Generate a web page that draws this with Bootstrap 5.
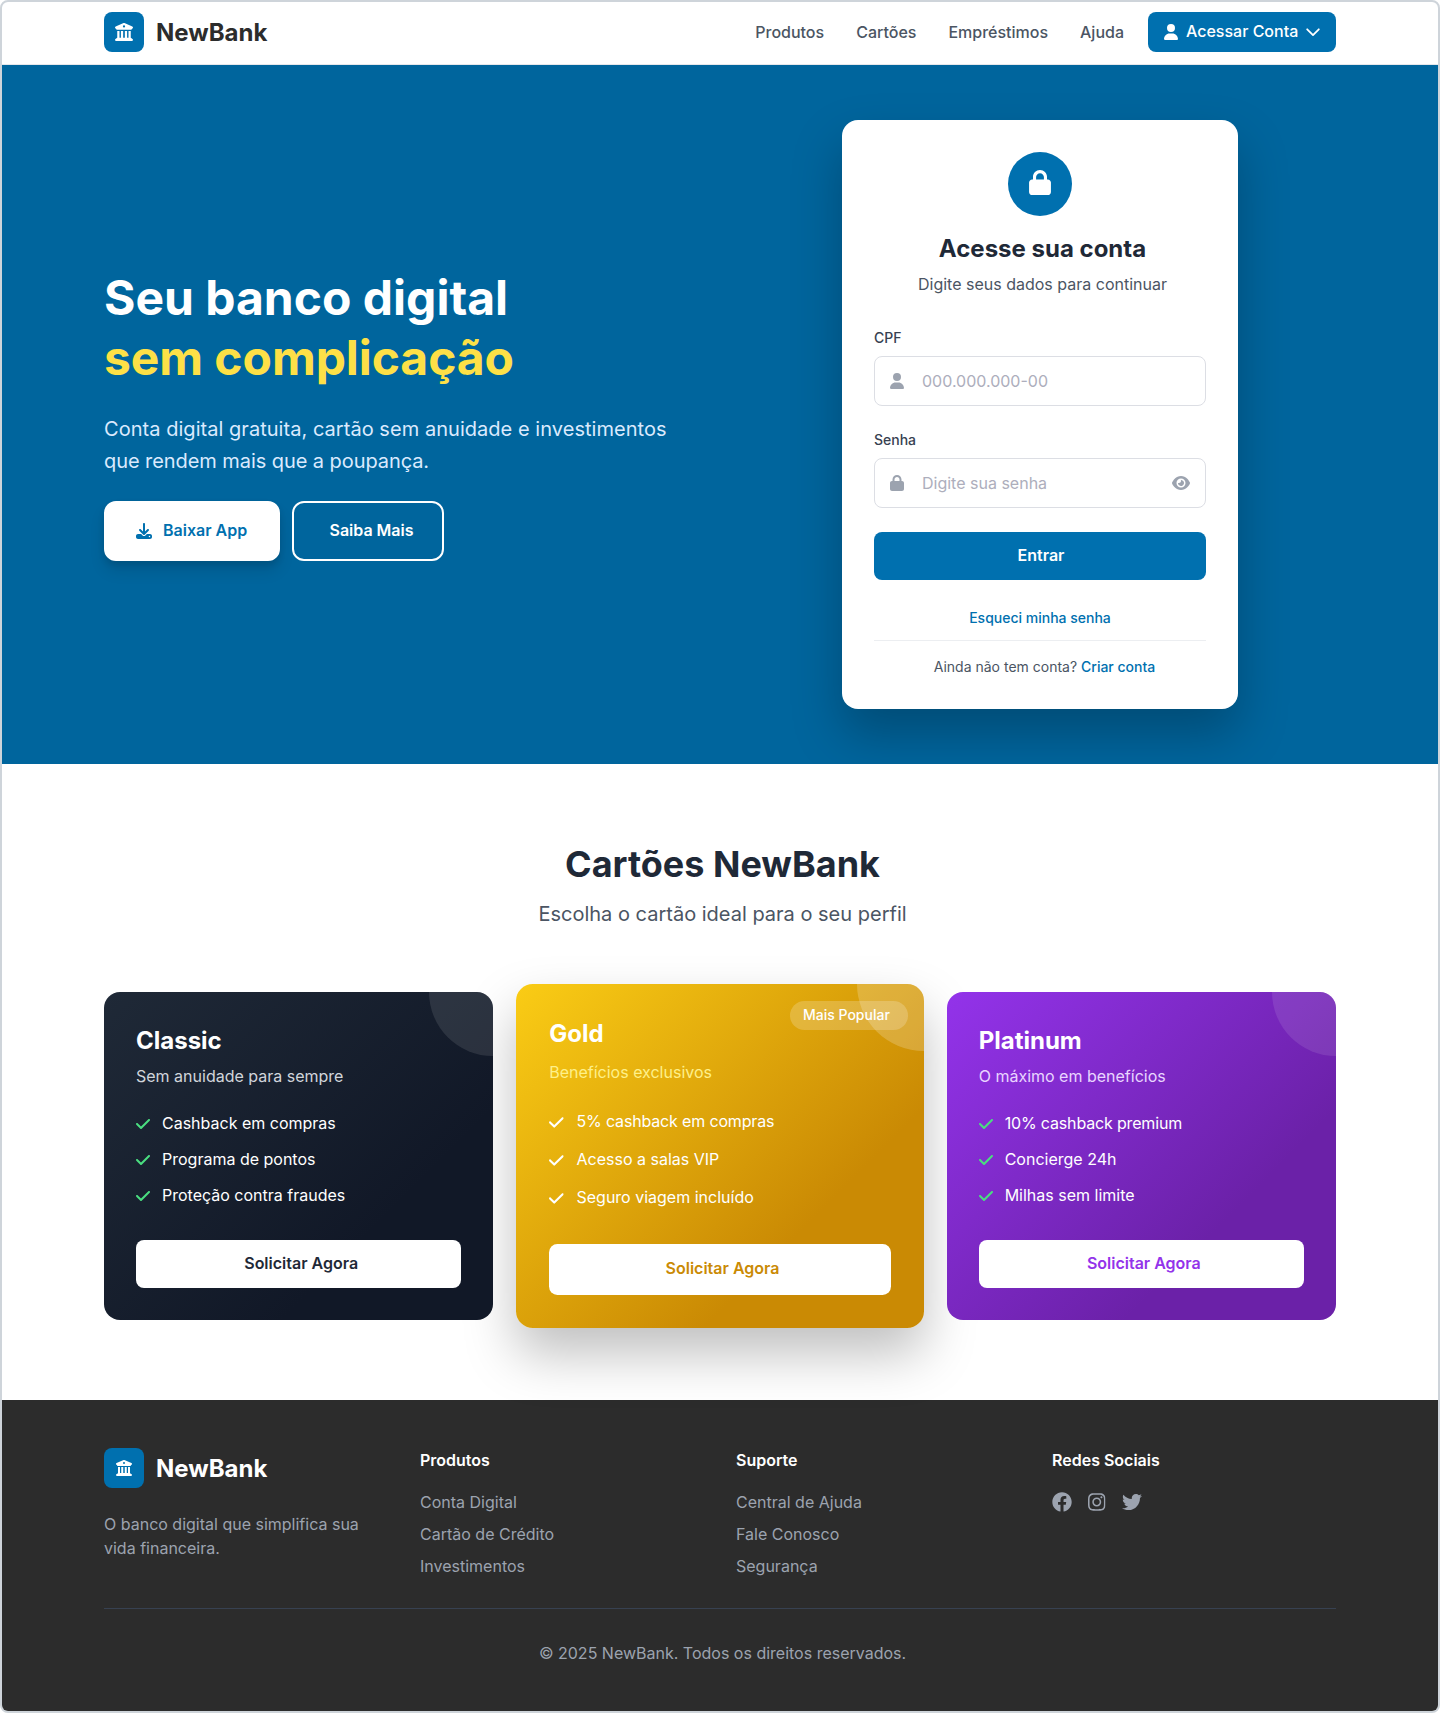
<!DOCTYPE html>
<html lang="pt-BR">
<head>
<meta charset="utf-8">
<meta name="viewport" content="width=device-width, initial-scale=1">
<title>NewBank</title>
<link href="https://cdn.jsdelivr.net/npm/bootstrap@5.3.0/dist/css/bootstrap.min.css" rel="stylesheet">
<style>
  :root { --nb-primary: #0070af; --nb-deep: #00659d; --nb-ink: #1f2937; --nb-body: #4b5563; --nb-muted: #9ca3af; }
  body { font-family: Inter, "Liberation Sans", sans-serif; font-size: 16px; line-height: 24px; color: var(--nb-body); background: #fff; }
  svg { display: block; fill: currentColor; flex: none; }
  .page-frame { border: 2px solid #ced4da; border-radius: 8px; overflow: hidden; height: 1713px; }
  .wrap { width: 1280px; margin: 0 auto; padding: 0 24px; }
  .topbar { height: 63px; padding: 10px 0 12px; border-bottom: 1px solid #e5e7eb; }
  .brand-tile { width: 40px; height: 40px; border-radius: 8px; background: var(--nb-primary); color: #fff; }
  .brand-name { font-size: 24px; font-weight: 700; line-height: 32px; color: #2c2c2c; padding-top: 2px; }
  .topbar .nav-link { padding: 0; font-weight: 500; color: var(--nb-body); }
  .main-nav { gap: 32px; margin-right: 24px; }
  .btn-account { width: 188px; height: 40px; padding: 0 0 0 16px; border: 0; border-radius: 8px; background: var(--nb-primary); color: #fff; font-weight: 500; }
  .btn-account span { padding-bottom: 2px; }
  .hero { height: 699px; padding-bottom: 1px; background: var(--nb-deep); overflow: hidden; }
  .hero-cols { display: grid; grid-template-columns: 592px 592px; gap: 48px; }
  .hero h1 { font-size: 48px; line-height: 60px; font-weight: 700; color: #fff; margin: 0 0 25px; }
  .hero h1 span { color: #fde047; letter-spacing: -.07px; }
  .hero-text { font-size: 20px; line-height: 32.5px; color: #dbeafe; margin: 0 0 23px; letter-spacing: .04px; }
  .hero-text span { letter-spacing: -.07px; }
  .btn-hero { height: 60px; border-radius: 12px; font-weight: 600; border: 2px solid #fff; }
  .btn-hero span { padding-bottom: 1px; }
  .btn-download { width: 176px; padding: 0 0 0 30px; gap: 11px; background: #fff; color: var(--nb-primary); box-shadow: 0 10px 15px rgba(0,0,0,.1), 0 4px 6px rgba(0,0,0,.1); }
  .btn-more { width: 152px; color: #fff; padding-left: 19px; }
  .login-box { width: 396px; height: 589px; padding: 32px; border-radius: 16px; background: #fff; box-shadow: 0 25px 50px rgba(0,0,0,.25); }
  .lock-disc { width: 64px; height: 64px; padding-bottom: 2px; border-radius: 50%; background: var(--nb-primary); color: #fff; margin-bottom: 17px; }
  .login-box h2 { font-size: 24px; line-height: 32px; font-weight: 700; color: var(--nb-ink); margin: 0 0 7px; }
  .form-label { font-size: 14px; line-height: 20px; font-weight: 500; color: #374151; margin: 0 0 8px; display: block; }
  .field { height: 50px; border: 1px solid #dcdee4; border-radius: 8px; padding: 0 15px; color: var(--nb-muted); margin-bottom: 24px; }
  .field input { border: 0; outline: 0; background: none; flex: 1; min-width: 0; margin-left: 18px; padding: 0; color: var(--nb-ink); }
  .field input::placeholder { color: #adaebc; opacity: 1; }
  .btn-enter { height: 48px; padding: 0 0 2px 2px; border: 0; border-radius: 8px; background: var(--nb-primary); color: #fff; font-weight: 600; margin-bottom: 28px; }
  .small-line { font-size: 14px; line-height: 20px; }
  .small-line a, a.small-line { color: var(--nb-primary); font-weight: 500; text-decoration: none; }
  .login-foot { margin-top: 12px; border-top: 1px solid #eceef1; padding: 16px 0 0 9px; }
  .cards-zone { height: 636px; padding-top: 80px; }
  .cards-zone h2 { font-size: 36px; line-height: 40px; font-weight: 700; color: var(--nb-ink); margin: 0 0 16px; }
  .cards-sub { font-size: 20px; line-height: 28px; margin: 0 0 64px; }
  .offer-row { --bs-gutter-x: 32px; }
  .offer { --u: 1px; --glow: .1; position: relative; overflow: hidden; height: calc(328 * var(--u)); padding: calc(32 * var(--u)); border-radius: calc(16 * var(--u)); color: #fff; }
  .offer::after { content: ""; position: absolute; width: calc(128 * var(--u)); height: calc(128 * var(--u)); top: calc(-64 * var(--u)); right: calc(-64 * var(--u)); border-radius: 50%; background: rgba(255,255,255,var(--glow)); }
  .offer h3 { font-size: 24px; line-height: 32px; font-weight: 700; height: calc(32 * var(--u)); margin: 0 0 calc(8 * var(--u)); padding-top: 1px; }
  .offer-sub { height: calc(24 * var(--u)); margin: 0 0 calc(24 * var(--u)); }
  .offer ul { margin: 0 0 calc(32 * var(--u)); padding: 0; list-style: none; display: grid; gap: calc(12 * var(--u)); }
  .offer li { display: flex; align-items: center; gap: calc(12 * var(--u)); height: calc(24 * var(--u)); }
  .offer li span { padding-bottom: 2px; }
  .offer li .pct { letter-spacing: -.16px; }
  .offer li svg { width: calc(14 * var(--u)); height: calc(16 * var(--u)); color: #4ade80; }
  .offer .btn { height: calc(48 * var(--u)); padding: 0 0 2px 5px; border: 0; border-radius: calc(8 * var(--u)); background: #fff; font-weight: 600; }
  .offer-classic { background: linear-gradient(135deg, #1f2937 0%, #111827 70.7%); }
  .offer-classic .offer-sub { color: #d1d5db; }
  .offer-classic .btn { color: #1f2937; }
  .gold-shadow { border-radius: 16.8px; box-shadow: 0 26px 52px rgba(0,0,0,.25); margin: -8.2px -9.73px; }
  .offer-gold { --u: 1.05px; --glow: .2; background: linear-gradient(135deg, #facc15 0%, #ca8a04 70.7%); }
  .offer-gold .offer-sub { color: #fef08a; padding-top: .6px; }
  .offer-gold li svg { color: #fff; }
  .offer-gold .btn { color: #ca8a04; }
  .offer-platinum { background: linear-gradient(135deg, #9333ea 0%, #6b21a8 70.7%); }
  .offer-platinum .offer-sub { color: #e9d5ff; }
  .offer-platinum .btn { color: #9333ea; }
  .popular-pill { position: absolute; top: 16.8px; right: 16.8px; width: 118px; height: 29.4px; padding: 4px 0 0 13.4px; border-radius: 15px; background: rgba(255,255,255,.2); font-size: 14px; line-height: 20px; font-weight: 500; }
  .site-footer { height: 311px; background: #2c2c2c; color: var(--nb-muted); padding-top: 48px; }
  .foot-cols { --bs-gutter-x: 32px; height: 160px; }
  .site-footer .brand-name { color: #fff; }
  .site-footer h4 { font-size: 16px; line-height: 24px; font-weight: 600; color: #fff; margin: 0; }
  .foot-links { margin: 18px 0 0; padding: 0; list-style: none; display: grid; gap: 8px; }
  .foot-links a, .socials a { color: inherit; text-decoration: none; }
  .socials { margin-top: 19.5px; gap: 16px; }
  .foot-base { border-top: 1px solid #374151; padding: 32px 0 0 5px; }
  .nudge { padding-left: 5px; }
</style>
</head>
<body>
<svg width="0" height="0" class="position-absolute" aria-hidden="true">
  <symbol id="i-bank" viewBox="0 0 512 512"><path d="M243.4 2.6l-224 96c-14 6-21.8 21-18.7 35.8S16.8 160 32 160v8c0 13.3 10.7 24 24 24H456c13.3 0 24-10.7 24-24v-8c15.2 0 28.3-10.7 31.3-25.6s-4.8-29.9-18.7-35.8l-224-96c-8-3.4-17.2-3.4-25.2 0zM128 224H64V420.3c-.6 .3-1.2 .7-1.8 1.1l-48 32c-11.7 7.8-17 22.4-12.9 35.9S17.9 512 32 512H480c14.1 0 26.5-9.2 30.6-22.7s-1.1-28.1-12.9-35.9l-48-32c-.6-.4-1.2-.7-1.8-1.1V224H384V416H344V224H280V416H232V224H168V416H128V224zM256 64a32 32 0 1 1 0 64 32 32 0 1 1 0-64z"/></symbol>
  <symbol id="i-user" viewBox="0 0 448 512"><path d="M224 256A128 128 0 1 0 224 0a128 128 0 1 0 0 256zm-45.7 48C79.8 304 0 383.8 0 482.3C0 498.7 13.3 512 29.7 512H418.3c16.4 0 29.7-13.3 29.7-29.7C448 383.8 368.2 304 269.7 304H178.3z"/></symbol>
  <symbol id="i-lock" viewBox="0 0 448 512"><path d="M144 144v48H304V144c0-44.2-35.8-80-80-80s-80 35.8-80 80zM80 192V144C80 64.5 144.5 0 224 0s144 64.5 144 144v48h16c35.3 0 64 28.7 64 64V448c0 35.3-28.7 64-64 64H64c-35.3 0-64-28.7-64-64V256c0-35.3 28.7-64 64-64H80z"/></symbol>
  <symbol id="i-eye" viewBox="0 0 576 512"><path d="M288 32c-80.8 0-145.5 36.8-192.6 80.6C48.6 156 17.3 208 2.5 243.7c-3.3 7.9-3.3 16.7 0 24.6C17.3 304 48.6 356 95.4 399.4C142.5 443.2 207.2 480 288 480s145.5-36.8 192.6-80.6c46.8-43.5 78.1-95.4 93-131.1c3.3-7.9 3.3-16.7 0-24.6c-14.9-35.7-46.2-87.7-93-131.1C433.5 68.8 368.8 32 288 32zM144 256a144 144 0 1 1 288 0 144 144 0 1 1 -288 0zm144-64c0 35.3-28.7 64-64 64c-7.1 0-13.9-1.2-20.3-3.3c-5.5-1.8-11.9 1.6-11.7 7.4c.3 6.9 1.3 13.8 3.2 20.7c13.7 51.2 66.4 81.6 117.6 67.9s81.6-66.4 67.9-117.6c-11.1-41.5-47.8-69.4-88.6-71.1c-5.8-.2-9.2 6.1-7.4 11.7c2.1 6.4 3.3 13.2 3.3 20.3z"/></symbol>
  <symbol id="i-check" viewBox="0 0 448 512"><path d="M438.6 105.4c12.5 12.5 12.5 32.8 0 45.3l-256 256c-12.5 12.5-32.8 12.5-45.3 0l-128-128c-12.5-12.5-12.5-32.8 0-45.3s32.8-12.5 45.3 0L160 338.7 393.4 105.4c12.5-12.5 32.8-12.5 45.3 0z"/></symbol>
  <symbol id="i-download" viewBox="0 0 512 512"><path d="M288 32c0-17.7-14.3-32-32-32s-32 14.3-32 32V274.7l-73.4-73.4c-12.5-12.5-32.8-12.5-45.3 0s-12.5 32.8 0 45.3l128 128c12.5 12.5 32.8 12.5 45.3 0l128-128c12.5-12.5 12.5-32.8 0-45.3s-32.8-12.5-45.3 0L288 274.7V32zM64 352c-35.3 0-64 28.7-64 64v32c0 35.3 28.7 64 64 64H448c35.3 0 64-28.7 64-64V416c0-35.3-28.7-64-64-64H346.5l-45.3 45.3c-25 25-65.5 25-90.5 0L165.5 352H64zm368 56a24 24 0 1 1 0 48 24 24 0 1 1 0-48z"/></symbol>
  <symbol id="i-facebook" viewBox="0 0 512 512"><path d="M504 256C504 119 393 8 256 8S8 119 8 256c0 123.78 90.69 226.38 209.25 245V327.69h-63V256h63v-54.64c0-62.15 37-96.48 93.67-96.48 27.14 0 55.52 4.84 55.52 4.84v61h-31.28c-30.8 0-40.41 19.12-40.41 38.73V256h68.78l-11 71.69h-57.78V501C413.31 482.38 504 379.78 504 256z"/></symbol>
  <symbol id="i-instagram" viewBox="0 0 448 512"><path d="M224.1 141c-63.6 0-114.9 51.3-114.9 114.9s51.3 114.9 114.9 114.9S339 319.5 339 255.9 287.7 141 224.1 141zm0 189.6c-41.1 0-74.7-33.5-74.7-74.7s33.5-74.7 74.7-74.7 74.7 33.5 74.7 74.7-33.6 74.7-74.7 74.7zm146.4-194.3c0 14.9-12 26.8-26.8 26.8-14.9 0-26.8-12-26.8-26.8s12-26.8 26.8-26.8 26.8 12 26.8 26.8zm76.1 27.2c-1.7-35.9-9.9-67.7-36.2-93.9-26.2-26.2-58-34.4-93.9-36.2-37-2.1-147.9-2.1-184.9 0-35.8 1.7-67.6 9.9-93.9 36.1s-34.4 58-36.2 93.9c-2.1 37-2.1 147.9 0 184.9 1.7 35.9 9.9 67.7 36.2 93.9s58 34.4 93.9 36.2c37 2.1 147.9 2.1 184.9 0 35.9-1.7 67.7-9.9 93.9-36.2 26.2-26.2 34.4-58 36.2-93.9 2.1-37 2.1-147.8 0-184.8zM398.8 388c-7.8 19.6-22.9 34.7-42.6 42.6-29.5 11.7-99.5 9-132.1 9s-102.7 2.6-132.1-9c-19.6-7.8-34.7-22.9-42.6-42.6-11.7-29.5-9-99.5-9-132.1s-2.6-102.7 9-132.1c7.8-19.6 22.9-34.7 42.6-42.6 29.5-11.7 99.5-9 132.1-9s102.7-2.6 132.1 9c19.6 7.8 34.7 22.9 42.6 42.6 11.7 29.5 9 99.5 9 132.1s2.7 102.7-9 132.1z"/></symbol>
  <symbol id="i-twitter" viewBox="0 0 512 512"><path d="M459.37 151.716c.325 4.548.325 9.097.325 13.645 0 138.72-105.583 298.558-298.558 298.558-59.452 0-114.68-17.219-161.137-47.106 8.447.974 16.568 1.299 25.34 1.299 49.055 0 94.213-16.568 130.274-44.832-46.132-.975-84.792-31.188-98.112-72.772 6.498.974 12.995 1.624 19.818 1.624 9.421 0 18.843-1.3 27.614-3.573-48.081-9.747-84.143-51.98-84.143-102.985v-1.299c13.969 7.797 30.214 12.67 47.431 13.319-28.264-18.843-46.781-51.005-46.781-87.391 0-19.492 5.197-37.36 14.294-52.954 51.655 63.675 129.3 105.258 216.365 109.807-1.624-7.797-2.599-15.918-2.599-24.04 0-57.828 46.782-104.934 104.934-104.934 30.213 0 57.502 12.67 76.67 33.137 23.715-4.548 46.456-13.32 66.599-25.34-7.798 24.366-24.366 44.833-46.132 57.827 21.117-2.273 41.584-8.122 60.426-16.243-14.292 20.791-32.161 39.308-52.628 54.253z"/></symbol>
</svg>
<div class="page-frame">
  <header class="topbar">
    <div class="wrap d-flex align-items-center justify-content-between">
      <div class="d-flex align-items-center">
        <div class="brand-tile d-flex align-items-center justify-content-center me-2"><svg width="18" height="18"><use href="#i-bank"/></svg></div>
        <span class="brand-name ms-1">NewBank</span>
      </div>
      <div class="d-flex align-items-center">
        <nav class="nav main-nav">
          <a class="nav-link" href="#">Produtos</a>
          <a class="nav-link" href="#">Cartões</a>
          <a class="nav-link" href="#">Empréstimos</a>
          <a class="nav-link" href="#">Ajuda</a>
        </nav>
        <button class="btn btn-account d-flex align-items-center gap-2" type="button">
          <svg width="14" height="16"><use href="#i-user"/></svg>
          <span>Acessar Conta</span>
          <svg width="14" height="16" viewBox="0 0 14 16"><path d="M1.2 5.3 7 11.1l5.8-5.8" fill="none" stroke="currentColor" stroke-width="1.8" stroke-linecap="round" stroke-linejoin="round"/></svg>
        </button>
      </div>
    </div>
  </header>

  <section class="hero d-flex align-items-center">
    <div class="wrap hero-cols align-items-center">
      <div>
        <h1>Seu banco digital<br><span>sem complicação</span></h1>
        <p class="hero-text">Conta digital gratuita, cartão sem anuidade e investimentos<br><span>que rendem mais que a poupança.</span></p>
        <div class="d-flex">
          <a class="btn btn-hero btn-download d-flex align-items-center me-2" href="#"><svg width="16" height="16"><use href="#i-download"/></svg><span>Baixar App</span></a>
          <a class="btn btn-hero btn-more d-flex align-items-center justify-content-center ms-1" href="#"><span>Saiba Mais</span></a>
        </div>
      </div>
      <form class="login-box mx-auto">
        <div class="lock-disc d-flex align-items-center justify-content-center mx-auto"><svg width="22" height="25"><use href="#i-lock"/></svg></div>
        <h2 class="text-center nudge">Acesse sua conta</h2>
        <p class="text-center nudge mb-0 pb-2">Digite seus dados para continuar</p>
        <label class="form-label pt-4" for="cpf">CPF</label>
        <div class="field d-flex align-items-center"><svg width="14" height="16"><use href="#i-user"/></svg><input id="cpf" type="text" placeholder="000.000.000-00"></div>
        <label class="form-label" for="senha">Senha</label>
        <div class="field d-flex align-items-center"><svg width="14" height="16"><use href="#i-lock"/></svg><input id="senha" type="password" placeholder="Digite sua senha"><svg width="18" height="16"><use href="#i-eye"/></svg></div>
        <button class="btn btn-enter w-100" type="button">Entrar</button>
        <a class="small-line d-block text-center" href="#">Esqueci minha senha</a>
        <div class="login-foot small-line text-center">Ainda não tem conta? <a href="#">Criar conta</a></div>
      </form>
    </div>
  </section>

  <section class="cards-zone">
    <div class="wrap">
      <h2 class="text-center nudge">Cartões NewBank</h2>
      <p class="cards-sub text-center nudge">Escolha o cartão ideal para o seu perfil</p>
      <div class="row offer-row">
        <div class="col-4">
          <div class="offer offer-classic">
            <h3>Classic</h3>
            <p class="offer-sub">Sem anuidade para sempre</p>
            <ul>
              <li><svg><use href="#i-check"/></svg><span>Cashback em compras</span></li>
              <li><svg><use href="#i-check"/></svg><span>Programa de pontos</span></li>
              <li><svg><use href="#i-check"/></svg><span>Proteção contra fraudes</span></li>
            </ul>
            <button class="btn w-100" type="button">Solicitar Agora</button>
          </div>
        </div>
        <div class="col-4">
          <div class="gold-shadow">
            <div class="offer offer-gold">
              <span class="popular-pill">Mais Popular</span>
              <h3>Gold</h3>
              <p class="offer-sub">Benefícios exclusivos</p>
              <ul>
                <li><svg><use href="#i-check"/></svg><span class="pct">5% cashback em compras</span></li>
                <li><svg><use href="#i-check"/></svg><span>Acesso a salas VIP</span></li>
                <li><svg><use href="#i-check"/></svg><span>Seguro viagem incluído</span></li>
              </ul>
              <button class="btn w-100" type="button">Solicitar Agora</button>
            </div>
          </div>
        </div>
        <div class="col-4">
          <div class="offer offer-platinum">
            <h3>Platinum</h3>
            <p class="offer-sub">O máximo em benefícios</p>
            <ul>
              <li><svg><use href="#i-check"/></svg><span class="pct">10% cashback premium</span></li>
              <li><svg><use href="#i-check"/></svg><span>Concierge 24h</span></li>
              <li><svg><use href="#i-check"/></svg><span>Milhas sem limite</span></li>
            </ul>
            <button class="btn w-100" type="button">Solicitar Agora</button>
          </div>
        </div>
      </div>
    </div>
  </section>

  <footer class="site-footer">
    <div class="wrap">
      <div class="row foot-cols">
        <div class="col-3">
          <div class="d-flex align-items-center mb-4">
            <div class="brand-tile d-flex align-items-center justify-content-center me-2"><svg width="16" height="16"><use href="#i-bank"/></svg></div>
            <span class="brand-name ms-1">NewBank</span>
          </div>
          <p class="mb-0">O banco digital que simplifica sua<br>vida financeira.</p>
        </div>
        <div class="col-3">
          <h4>Produtos</h4>
          <ul class="foot-links"><li><a href="#">Conta Digital</a></li><li><a href="#">Cartão de Crédito</a></li><li><a href="#">Investimentos</a></li></ul>
        </div>
        <div class="col-3">
          <h4>Suporte</h4>
          <ul class="foot-links"><li><a href="#">Central de Ajuda</a></li><li><a href="#">Fale Conosco</a></li><li><a href="#">Segurança</a></li></ul>
        </div>
        <div class="col-3">
          <h4>Redes Sociais</h4>
          <div class="socials d-flex align-items-center">
            <a href="#"><svg width="20" height="20"><use href="#i-facebook"/></svg></a>
            <a href="#"><svg width="17.5" height="20"><use href="#i-instagram"/></svg></a>
            <a href="#"><svg width="20" height="20"><use href="#i-twitter"/></svg></a>
          </div>
        </div>
      </div>
      <div class="foot-base text-center">© 2025 NewBank. Todos os direitos reservados.</div>
    </div>
  </footer>
</div>
<script src="https://cdn.jsdelivr.net/npm/bootstrap@5.3.0/dist/js/bootstrap.bundle.min.js"></script>
</body>
</html>
